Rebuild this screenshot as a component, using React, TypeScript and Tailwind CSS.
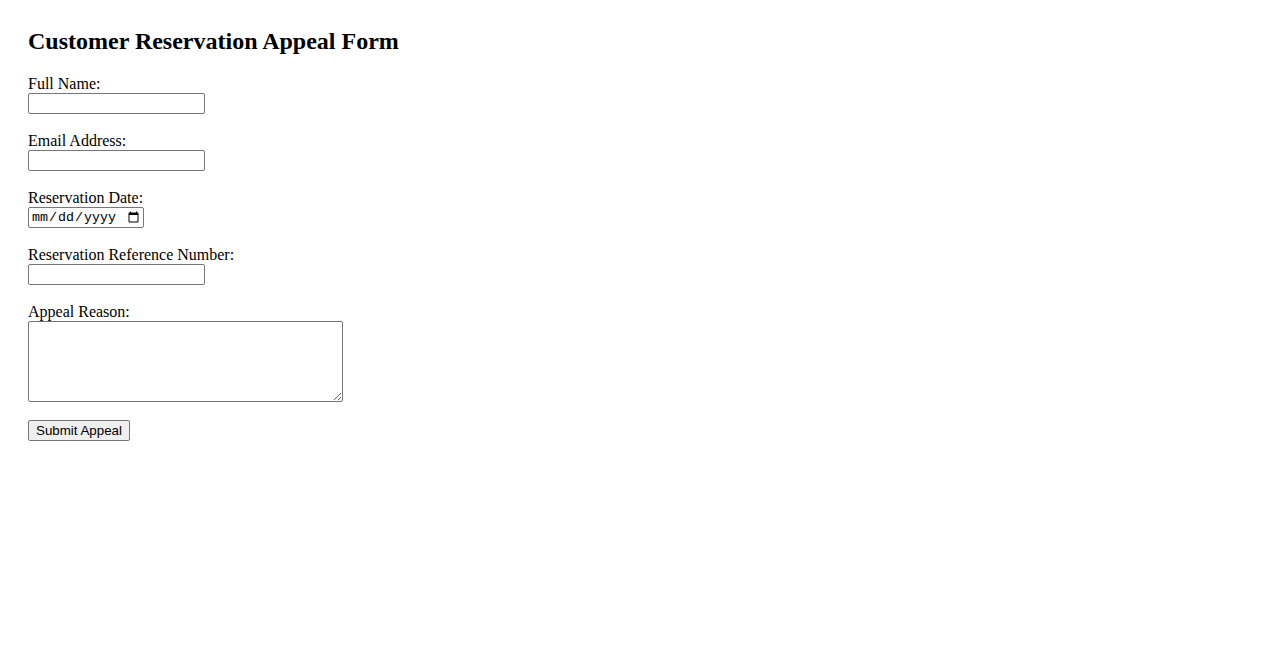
import React from "react";

const fieldInput =
  "block h-[21px] w-[177px] border border-[#767676] rounded-[2px] bg-white px-[2px] text-[13.33px] font-['Liberation_Sans',Arial,sans-serif] text-black outline-none";

function Field({ label, children }: { label: string; children: React.ReactNode }) {
  return (
    <div className="flex flex-col items-start mb-[18px]">
      <label className="block text-[16px] leading-[18px]">{label}</label>
      {children}
    </div>
  );
}

export default function App() {
  return (
    <div className="min-h-[650px] w-full bg-white text-black font-['Liberation_Serif','Times_New_Roman',serif] pt-[28px] pl-[28px]">
      <h2 className="text-[24px] leading-[27px] font-bold mb-[20px]">
        Customer Reservation Appeal Form
      </h2>
      <form className="flex flex-col items-start" onSubmit={(e) => e.preventDefault()}>
        <Field label="Full Name:">
          <input type="text" className={fieldInput} />
        </Field>
        <Field label="Email Address:">
          <input type="email" className={fieldInput} />
        </Field>
        <Field label="Reservation Date:">
          <input
            type="date"
            className="block h-[21px] w-[116px] border border-[#767676] rounded-[2px] bg-white pl-[2px] pr-[1px] text-[13.33px] font-['Liberation_Mono','Courier_New',monospace] text-black outline-none"
          />
        </Field>
        <Field label="Reservation Reference Number:">
          <input type="text" className={fieldInput} />
        </Field>
        <Field label="Appeal Reason:">
          <textarea
            rows={4}
            className="block h-[81px] w-[315px] border border-[#767676] rounded-[2px] bg-white px-[2px] py-[2px] text-[13.33px] font-['Liberation_Mono','Courier_New',monospace] text-black outline-none"
          />
        </Field>
        <button
          type="submit"
          className="h-[21px] w-[102px] border border-[#767676] rounded-[2px] bg-[#efefef] px-[6px] text-[13.33px] leading-[17px] font-['Liberation_Sans',Arial,sans-serif] text-black"
        >
          Submit Appeal
        </button>
      </form>
    </div>
  );
}
